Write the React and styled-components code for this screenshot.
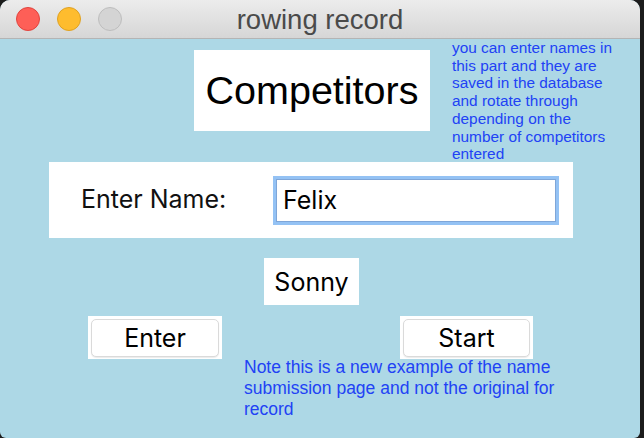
import React from "react";
import styled, { createGlobalStyle } from "styled-components";

const Global = createGlobalStyle`
  html, body { margin: 0; padding: 0; background: #1c1c1c; }
  body { width: 644px; height: 438px; overflow: hidden; }
`;

const Win = styled.div`
  width: 640px;
  height: 438px;
  display: flex;
  flex-direction: column;
  background: #add8e6;
  border-radius: 10px 10px 6px 6px;
  overflow: hidden;
`;

const TitleBar = styled.div`
  height: 38px;
  flex-shrink: 0;
  position: relative;
  display: flex;
  align-items: center;
  justify-content: center;
  background: linear-gradient(#ececec, #d6d6d6);
  border-bottom: 1px solid #b4b4b4;
`;

const Lights = styled.div`
  position: absolute;
  left: 16px;
  top: 7px;
  display: flex;
  gap: 17px;
`;

const Light = styled.span`
  width: 24px;
  height: 24px;
  border-radius: 50%;
  box-sizing: border-box;
  background: ${(p) => p.$bg};
  border: 1px solid ${(p) => p.$bd};
`;

const Title = styled.div`
  font-family: "Liberation Sans", Arial, sans-serif;
  font-size: 27.5px;
  color: #4a4a4a;
  margin-top: 1px;
`;

const Body = styled.div`
  display: flex;
  flex-direction: column;
  font-family: Inter, "Liberation Sans", sans-serif;
`;

const TopRow = styled.div`
  display: flex;
  align-items: flex-start;
  padding-left: 194px;
  height: 123px;
`;

const HeadBox = styled.div`
  width: 236px;
  height: 81px;
  margin-top: 11px;
  background: #fff;
  display: flex;
  align-items: center;
  justify-content: center;
  font-family: "Liberation Sans", Arial, sans-serif;
  font-size: 39.5px;
  color: #000;
`;

const SideNote = styled.div`
  margin-left: 22px;
  width: 166px;
  font-family: "Liberation Sans", Arial, sans-serif;
  font-size: 15.4px;
  line-height: 17.7px;
  color: #2142f5;
`;

const NameFrame = styled.div`
  margin-left: 49px;
  width: 524px;
  height: 76px;
  background: #fff;
  display: flex;
  align-items: center;
  box-sizing: border-box;
  padding-left: 32px;
`;

const Label = styled.span`
  font-size: 25px;
  color: #111;
  width: 192px;
  margin-top: -2px;
`;

const Field = styled.div`
  width: 286px;
  height: 49px;
  box-sizing: border-box;
  border: 3px solid #94c2f4;
  display: flex;
  align-items: center;
  background: #fff;
`;

const FieldInner = styled.div`
  flex: 1;
  align-self: stretch;
  border: 1px solid #7fa6d8;
  display: flex;
  align-items: center;
  padding-left: 6px;
  font-size: 25px;
  color: #000;
`;

const SonnyRow = styled.div`
  display: flex;
  padding-left: 264px;
  margin-top: 20px;
`;

const SonnyBox = styled.div`
  width: 95px;
  height: 47px;
  background: #fff;
  display: flex;
  align-items: center;
  justify-content: center;
  font-size: 25px;
  color: #000;
`;

const ButtonRow = styled.div`
  display: flex;
  padding-left: 88px;
  gap: 178px;
  margin-top: 11px;
`;

const BtnWrap = styled.div`
  width: ${(p) => p.$w}px;
  height: 43px;
  background: #fff;
  display: flex;
  align-items: center;
  justify-content: center;
`;

const Btn = styled.button`
  width: calc(100% - 6px);
  height: 38px;
  border-radius: 5px;
  border: 1px solid #dadada;
  box-shadow: 0 1px 1px rgba(0, 0, 0, 0.08);
  background: #fff;
  font-family: Inter, "Liberation Sans", sans-serif;
  font-size: 25px;
  color: #000;
  padding: 0;
`;

const Note = styled.div`
  margin-left: 244px;
  margin-top: -2px;
  width: 360px;
  font-family: "Liberation Sans", Arial, sans-serif;
  font-size: 17.5px;
  line-height: 21px;
  color: #2142f5;
`;

export default function App() {
  return (
    <>
      <Global />
      <Win>
        <TitleBar>
          <Lights>
            <Light $bg="#fe5f57" $bd="#e0443e" />
            <Light $bg="#febc2e" $bd="#dea123" />
            <Light $bg="#d4d4d4" $bd="#bdbdbd" />
          </Lights>
          <Title>rowing record</Title>
        </TitleBar>
        <Body>
          <TopRow>
            <HeadBox>Competitors</HeadBox>
            <SideNote>
              you can enter names in this part and they are saved in the
              database and rotate through depending on the number of
              competitors entered
            </SideNote>
          </TopRow>
          <NameFrame>
            <Label>Enter Name:</Label>
            <Field>
              <FieldInner>Felix</FieldInner>
            </Field>
          </NameFrame>
          <SonnyRow>
            <SonnyBox>Sonny</SonnyBox>
          </SonnyRow>
          <ButtonRow>
            <BtnWrap $w={134}>
              <Btn>Enter</Btn>
            </BtnWrap>
            <BtnWrap $w={133}>
              <Btn>Start</Btn>
            </BtnWrap>
          </ButtonRow>
          <Note>
            Note this is a new example of the name submission page and not
            the original for record
          </Note>
        </Body>
      </Win>
    </>
  );
}
